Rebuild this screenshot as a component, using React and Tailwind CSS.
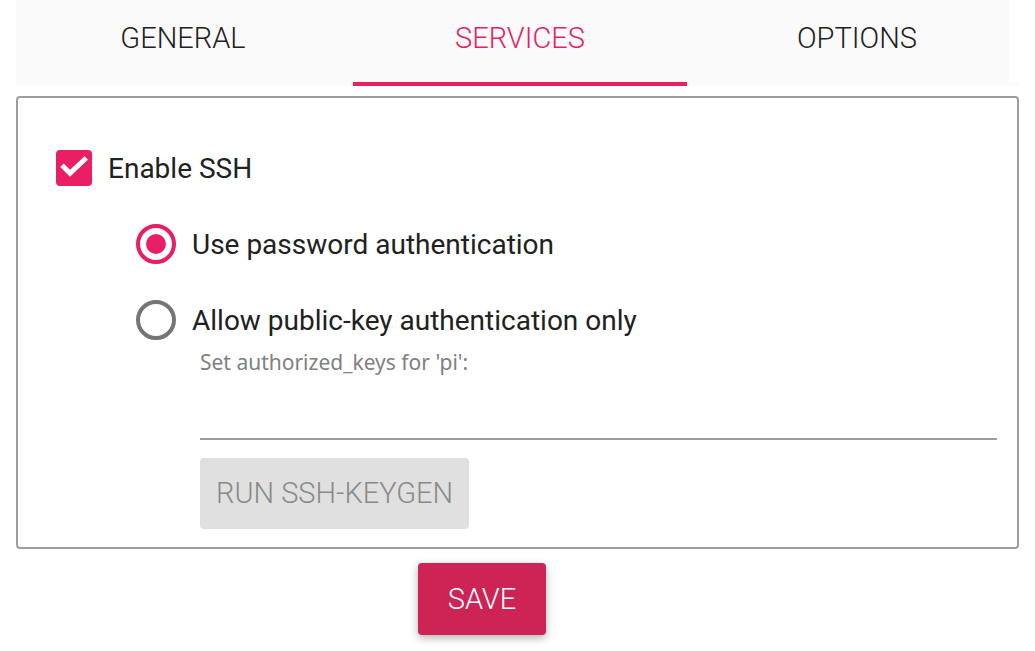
import { useState } from "react";

const TABS = ["General", "Services", "Options"];

function Tab({ label, selected, onSelect }) {
  return (
    <button
      type="button"
      role="tab"
      aria-selected={selected}
      onClick={onSelect}
      className={`flex h-full w-[calc((100%+9px)/3)] shrink-0 items-center justify-center pb-1.5 text-[29px] leading-8 font-light uppercase ${
        selected ? "text-[#e91e63]" : "text-[#212121]"
      }`}
    >
      {label}
    </button>
  );
}

function AuthOption({ id, label, checked, onChange }) {
  return (
    <div className="flex h-10 items-center gap-4">
      <input
        type="radio"
        name="auth"
        id={id}
        checked={checked}
        onChange={onChange}
        className="grid size-10 shrink-0 appearance-none place-items-center rounded-full border-4 border-[#757575] checked:border-[#e91e63] checked:before:size-5 checked:before:rounded-full checked:before:bg-[#e91e63] checked:before:content-['']"
      />
      <label htmlFor={id}>{label}</label>
    </div>
  );
}

export default function App() {
  const [ssh, setSsh] = useState(true);
  const [auth, setAuth] = useState("password");
  const [keys, setKeys] = useState("");

  return (
    <main className="bg-white px-4 pb-4 font-['Roboto',sans-serif] text-[28px] leading-[33px] text-[#212121]">
      <nav className="mr-px">
        <div role="tablist" className="mr-[9px] flex h-[82px] gap-[3px] overflow-hidden bg-[#fafafa]">
          {TABS.map((t) => (
            <Tab key={t} label={t} selected={t === "Services"} />
          ))}
        </div>
        <div className="flex h-1 bg-[#fafafa]">
          <div className="ml-[calc(100%/3+3px)] w-1/3 bg-[#e91e63]" />
        </div>
      </nav>

      <section className="mt-2.5 rounded border-2 border-[#9e9e9e] pt-[52px] pr-5 pb-[18px] pl-[38px]">
        <div className="flex h-9 items-center gap-4">
          <span className="grid size-9 shrink-0">
            <input
              type="checkbox"
              id="ssh"
              checked={ssh}
              onChange={(e) => setSsh(e.target.checked)}
              className="peer col-start-1 row-start-1 size-9 appearance-none rounded border-4 border-[#757575] checked:border-[#e91e63] checked:bg-[#e91e63]"
            />
            <svg
              viewBox="0 0 36 36"
              className="pointer-events-none invisible col-start-1 row-start-1 size-9 peer-checked:visible"
              fill="none"
              stroke="#fff"
              strokeWidth="5"
              aria-hidden="true"
            >
              <path d="M6 15.3L14 23.3L30.2 8" />
            </svg>
          </span>
          <label htmlFor="ssh">Enable SSH</label>
        </div>

        <div className="mt-[38px] flex flex-col gap-9 pl-20">
          <AuthOption
            id="auth-password"
            label="Use password authentication"
            checked={auth === "password"}
            onChange={() => setAuth("password")}
          />
          <AuthOption
            id="auth-key"
            label="Allow public-key authentication only"
            checked={auth === "key"}
            onChange={() => setAuth("key")}
          />
        </div>

        <div className="flex flex-col items-start pt-2 pl-36">
          <label
            htmlFor="keys"
            className="font-['Noto_Sans',sans-serif] text-[21px] leading-7 text-[#808080]"
          >
            Set authorized_keys for &apos;pi&apos;:
          </label>
          <input
            type="text"
            id="keys"
            value={keys}
            onChange={(e) => setKeys(e.target.value)}
            disabled={auth !== "key"}
            className="h-16 w-full border-b-2 border-[#9e9e9e] bg-transparent outline-none"
          />
          <button
            type="button"
            disabled={auth !== "key"}
            className="mt-[18px] h-[71px] rounded bg-[#e0e0e0] px-4 text-[29px] font-light text-[#8a8a8a] uppercase"
          >
            Run SSH-keygen
          </button>
        </div>
      </section>

      <div className="mt-3.5 flex justify-center pr-[71px]">
        <button
          type="button"
          className="h-[72px] rounded bg-[#cd2355] px-[30px] text-[29px] font-light text-white uppercase shadow-[0_3px_8px_rgba(0,0,0,0.3)]"
        >
          Save
        </button>
      </div>
    </main>
  );
}
